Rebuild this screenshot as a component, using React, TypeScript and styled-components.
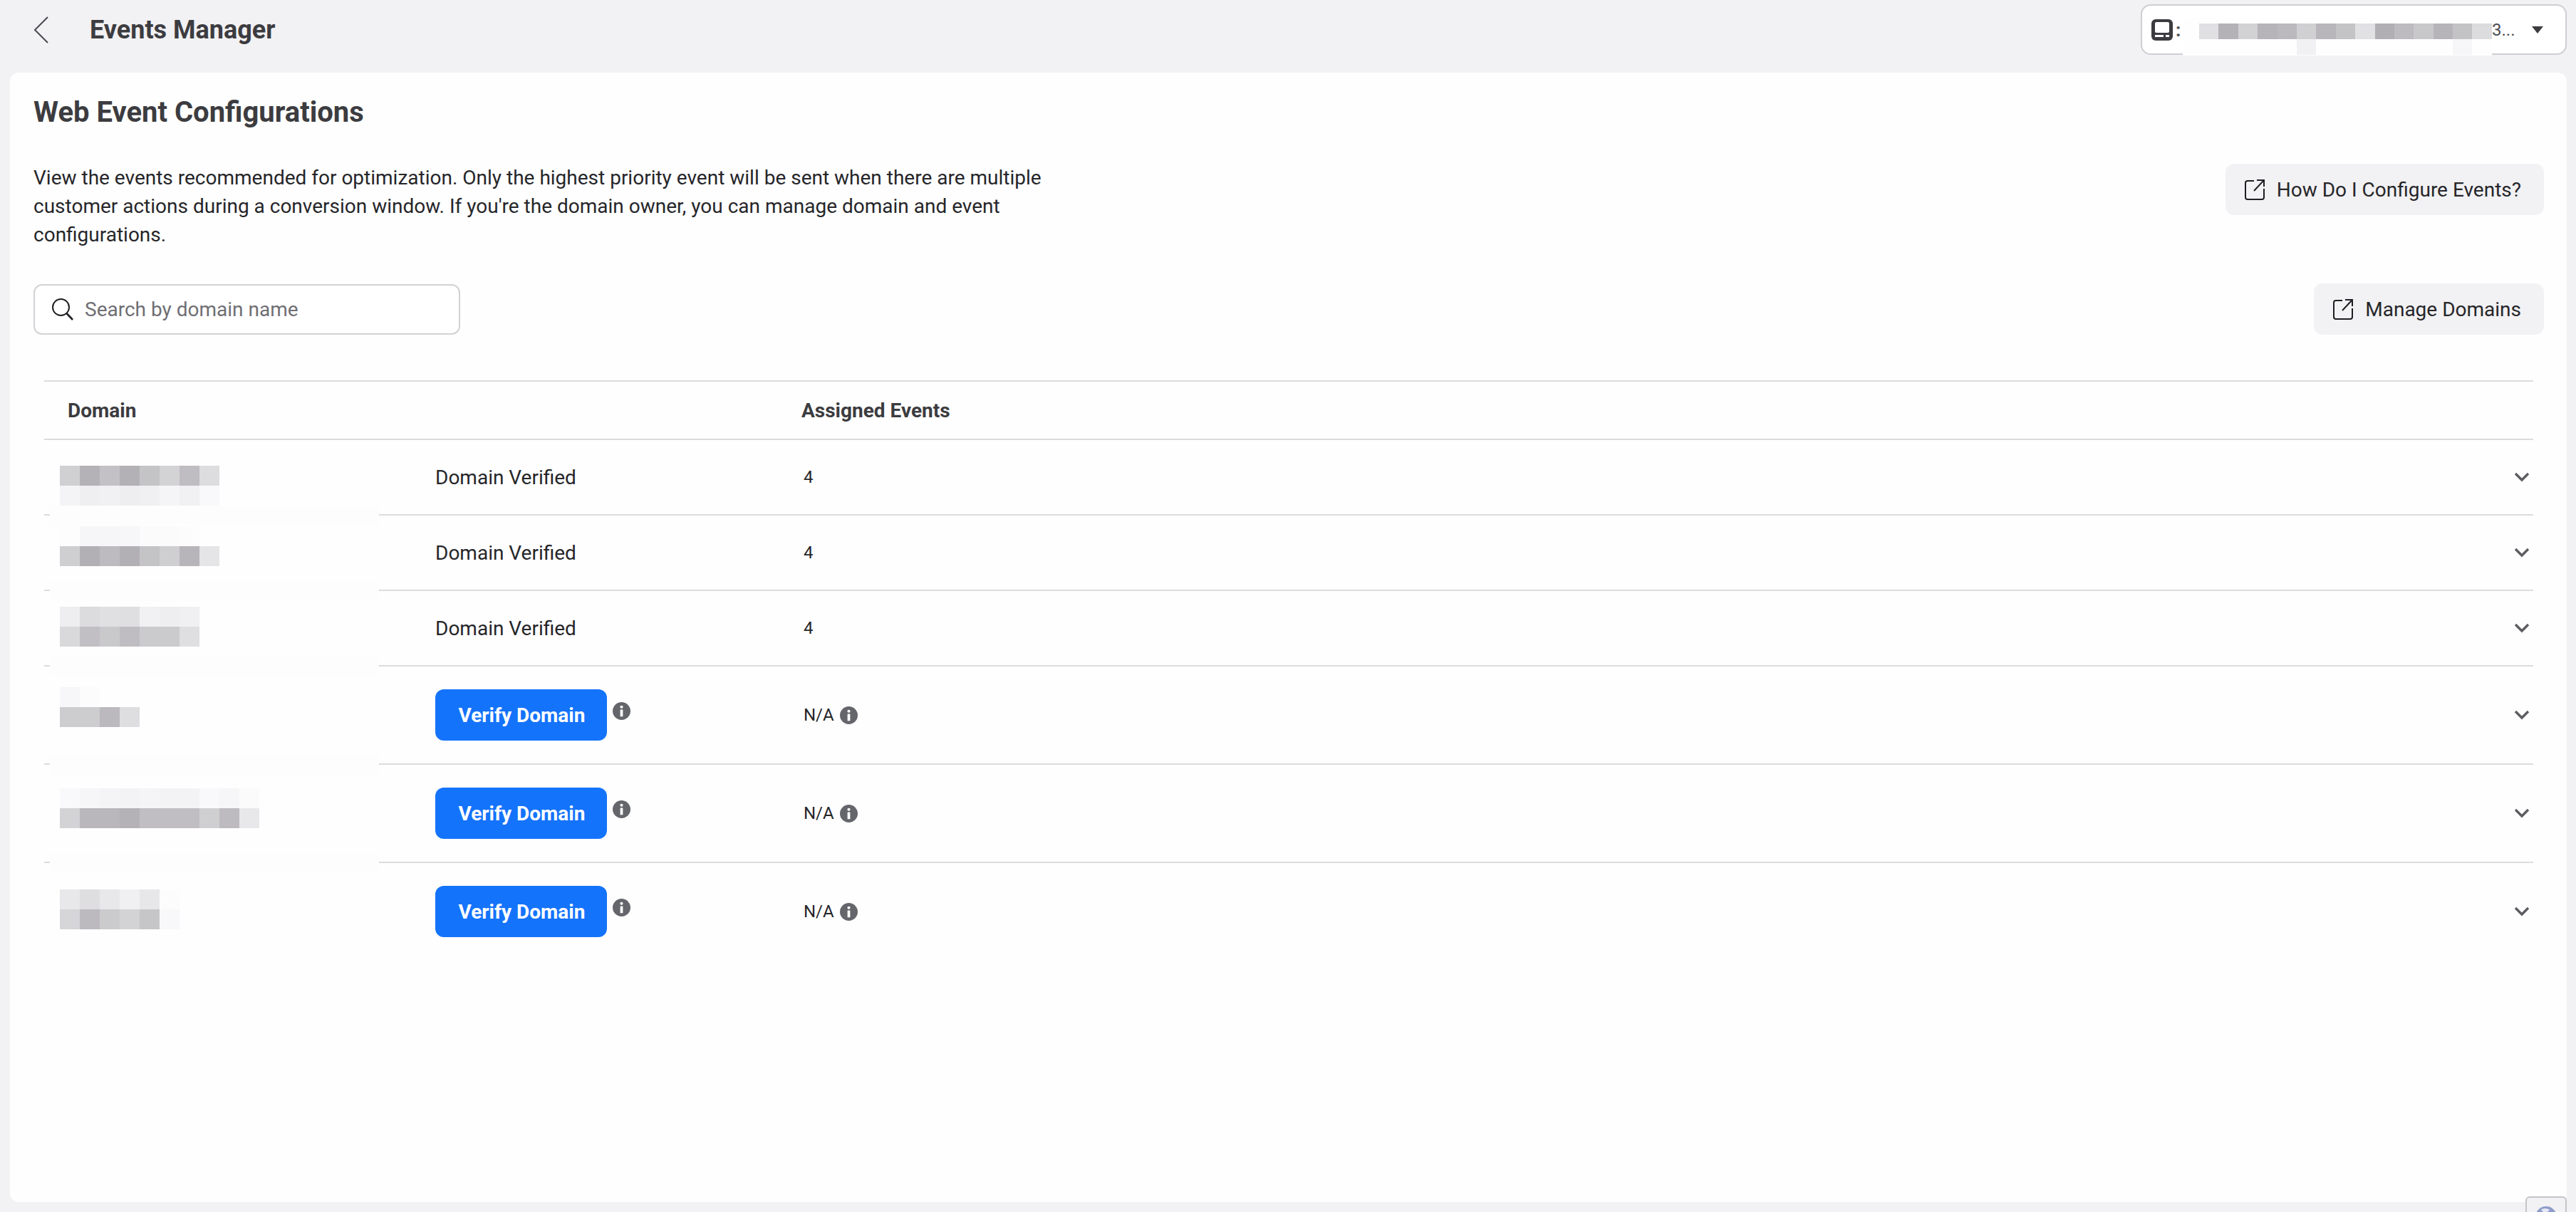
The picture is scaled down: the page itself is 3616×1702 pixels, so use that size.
import styled, { createGlobalStyle } from 'styled-components';

const GlobalStyle = createGlobalStyle`
html, body {
  margin: 0;
  padding: 0;
  height: 1702px;
  overflow: hidden;
  background: #f2f1f3;
  font-family: Roboto, "Liberation Sans", sans-serif;
}
* { box-sizing: border-box; }
`;

const Page = styled.div`
  position: relative;
  height: 1702px;
  overflow: hidden;
`;

const TopBar = styled.header`
  height: 102px;
  padding: 6px 13px 25px 47px;
  display: flex;
  align-items: flex-start;
  justify-content: space-between;
`;

const TopLeft = styled.div`
  display: flex;
  align-items: center;
  height: 71px;
`;

const BackIcon = styled.svg`
  width: 22px;
  height: 40px;
  margin-right: 57px;
`;

const AppTitle = styled.div`
  font-size: 36px;
  font-weight: 700;
  color: #3c3c40;
`;

const AccountSelect = styled.div`
  position: relative;
  width: 598px;
  height: 71px;
  background: #fff;
  border: 2px solid #cfced2;
  border-radius: 14px;
  display: flex;
  align-items: center;
  padding-left: 13px;
`;

const SelectDots = styled.span`
  font-size: 26px;
  font-weight: 700;
  color: #55555a;
  margin-left: 4px;
`;

const SelectEnd = styled.span`
  position: absolute;
  left: 491px;
  top: 20px;
  font-size: 24px;
  color: #4b4b50;
`;

const SelectSmear = styled.div`
  position: absolute;
  left: 57px;
  top: 17px;
  width: 434px;
  height: 53px;
  background: #fefefe;
  padding: 8px 0 0 23px;
`;

const SelectCaret = styled.svg`
  position: absolute;
  right: 30px;
  top: 28px;
  width: 18px;
  height: 12px;
`;

const Card = styled.main`
  height: 1586px;
  margin: 0 13px 0 14px;
  padding: 0 32px 0 33px;
  background: #fefefe;
  border-radius: 12px;
`;

const Title = styled.h1`
  margin: 0;
  height: 128px;
  padding-top: 36px;
  font-size: 40px;
  line-height: 40px;
  font-weight: 700;
  color: #3c3c40;
`;

const InfoRow = styled.div`
  display: flex;
  justify-content: space-between;
  align-items: flex-start;
`;

const Description = styled.p`
  margin: 0;
  width: 1440px;
  font-size: 28px;
  line-height: 40px;
  color: #26262a;
`;

const SoftButton = styled.button`
  height: 72px;
  display: flex;
  align-items: center;
  gap: 16px;
  padding: 0 32px 0 26px;
  border: none;
  border-radius: 12px;
  background: #f2f1f3;
  color: #26262a;
  font-family: inherit;
  font-size: 28px;
`;

const ExternalIcon = styled.svg`
  width: 30px;
  height: 30px;
  flex: none;
`;

const ToolRow = styled.div`
  margin-top: 48px;
  display: flex;
  justify-content: space-between;
  align-items: center;
`;

const SearchBox = styled.div`
  width: 599px;
  height: 71px;
  display: flex;
  align-items: center;
  gap: 15px;
  padding-left: 23px;
  border: 2px solid #d2d1d5;
  border-radius: 12px;
  background: #fff;
`;

const SearchIcon = styled.svg`
  width: 32px;
  height: 32px;
  flex: none;
`;

const Placeholder = styled.span`
  font-size: 28px;
  color: #6f6f74;
`;

const Table = styled.section`
  margin: 64px 15px 0 15px;
  border-top: 2px solid #dcdbde;
`;

const HeaderRow = styled.div`
  height: 80px;
  display: grid;
  grid-template-columns: 1030px 1fr;
  align-items: center;
  padding-left: 33px;
  font-size: 28px;
  font-weight: 700;
  color: #3c3c40;
`;

const Row = styled.div<{ $tall?: boolean }>`
  position: relative;
  height: ${(p) => (p.$tall ? 138 : 106)}px;
  border-top: 2px solid #dcdbde;
  display: grid;
  grid-template-columns: 527px 514px 1fr 30px;
  align-items: center;
  padding-left: 22px;
`;

const Smear = styled.div`
  position: absolute;
  left: 8px;
  top: -14px;
  width: 462px;
  height: 28px;
  background: #fefdfe;
`;

const Mosaic = styled.div<{ $offset: number }>`
  align-self: start;
  margin-top: ${(p) => p.$offset}px;
  position: relative;
  z-index: 1;
`;

const TileRow = styled.div`
  display: flex;
`;

const Tile = styled.span<{ $c: string; $w: number; $h: number }>`
  width: ${(p) => p.$w}px;
  height: ${(p) => p.$h}px;
  background: ${(p) => p.$c};
  flex: none;
`;

const StatusCell = styled.div`
  display: flex;
  align-items: center;
  font-size: 28px;
  color: #26262a;
`;

const VerifyButton = styled.button`
  width: 241px;
  height: 72px;
  border: none;
  border-radius: 12px;
  background: #1473fb;
  color: #fff;
  font-family: inherit;
  font-size: 28px;
  font-weight: 700;
  padding: 0 0 0 2px;
`;

const InfoIcon = styled.svg<{ $lift?: boolean }>`
  width: 25px;
  height: 25px;
  flex: none;
  margin-left: 8px;
  margin-bottom: ${(p) => (p.$lift ? 12 : 0)}px;
`;

const EventsCell = styled.div`
  display: flex;
  align-items: center;
  font-size: 24px;
  color: #26262a;
  padding-left: 3px;
`;

const Chevron = styled.svg`
  width: 24px;
  height: 16px;
  margin-left: 2px;
`;

const GlobeWidget = styled.div`
  position: absolute;
  right: 13px;
  top: 1680px;
  width: 58px;
  height: 60px;
  background: #f2f1f3;
  border: 2px solid #c5c4c8;
  border-radius: 6px;
  display: flex;
  justify-content: center;
  padding-top: 12px;
`;

const GlobeIcon = styled.svg`
  width: 30px;
  height: 30px;
`;

const Info = ({ lift }: { lift?: boolean }) => (
  <InfoIcon $lift={lift} viewBox="0 0 24 24">
    <circle cx="12" cy="12" r="12" fill="#65656c" />
    <circle cx="12" cy="6.5" r="2" fill="#fff" />
    <rect x="10.2" y="10" width="3.6" height="9.5" rx="0.6" fill="#fff" />
  </InfoIcon>
);

const External = () => (
  <ExternalIcon viewBox="0 0 30 30" fill="none" stroke="#1f1f23" strokeWidth="2">
    <path d="M14 3H5a3 3 0 0 0-3 3v20a3 3 0 0 0 3 3h20a3 3 0 0 0 3-3V14" />
    <path d="M14 17 28 2M18 2h10v9" />
  </ExternalIcon>
);

const ChevronDown = () => (
  <Chevron viewBox="0 0 24 16" fill="none" stroke="#5c5c61" strokeWidth="3.4">
    <path d="M3 3l9 9 9-9" />
  </Chevron>
);

const Pixels = ({ rows, w = 28, h = 28 }: { rows: string[][]; w?: number; h?: number }) => (
  <>
    {rows.map((cols, i) => (
      <TileRow key={i}>
        {cols.map((c, j) => (
          <Tile key={j} $c={c} $w={w} $h={h} />
        ))}
      </TileRow>
    ))}
  </>
);

const selectPixels = [
  ['#e0dfe2', '#b4b2b6', '#d2d1d4', '#b6b4b8', '#bbb9bd', '#d0cfd2', '#b8b6ba', '#c4c3c6', '#e1e0e3', '#b1afb3', '#bdbbbf', '#c8c7ca', '#b6b4b8', '#c3c2c5', '#dcdbde'],
  ['#fefefe', '#fefefe', '#fefefe', '#fefefe', '#fefefe', '#f1f0f2', '#fefefe', '#fefefe', '#fefefe', '#fefefe', '#fefefe', '#fefefe', '#fefefe', '#f6f5f7', '#fefefe'],
];

const domains = [
  {
    offset: 36,
    tiles: [
      ['#d0cfd2', '#b4b2b6', '#c3c1c5', '#b3b1b5', '#c4c3c6', '#d3d2d5', '#bfbdc1', '#dddcdf'],
      ['#f4f3f5', '#efeef0', '#f1f0f2', '#eeedf0', '#f0eff1', '#f5f4f6', '#f1f0f2', '#f9f8fa'],
    ],
    verified: true,
  },
  {
    offset: 15,
    tiles: [
      ['#fefdfe', '#f6f5f7', '#f6f5f7', '#f7f6f8', '#fcfbfc', '#fcfbfc', '#fdfcfd', '#fefefe'],
      ['#cfced1', '#b2b0b4', '#bdbbbf', '#b2b0b4', '#c4c3c6', '#cfced1', '#b7b5b9', '#e5e4e6'],
    ],
    verified: true,
  },
  {
    offset: 22,
    tiles: [
      ['#eeedf0', '#dcdbde', '#e0dfe2', '#dfdee1', '#f1f0f3', '#eeedf0', '#f0eff2'],
      ['#d9d8db', '#c1bfc3', '#c9c8cb', '#bfbdc1', '#cbcacd', '#cbcacd', '#dfdee1'],
    ],
    verified: true,
  },
  {
    offset: 29,
    tiles: [
      ['#f7f6f8', '#fdfcfd', '#fefefe', '#fefefe'],
      ['#cdcccf', '#cdcccf', '#bbb9bd', '#dedde0'],
    ],
    verified: false,
  },
  {
    offset: 33,
    tiles: [
      ['#f9f8fa', '#f6f5f7', '#f4f3f5', '#f3f2f4', '#f5f4f6', '#f3f2f4', '#f3f2f4', '#f9f8fa', '#f6f5f7', '#fcfbfc'],
      ['#d3d2d5', '#b9b7bb', '#b9b7bb', '#b4b2b6', '#c0bec2', '#c0bec2', '#c0bec2', '#cfced1', '#bdbbbf', '#e8e7ea'],
    ],
    verified: false,
  },
  {
    offset: 37,
    tiles: [
      ['#e8e7ea', '#dedde0', '#e8e7ea', '#f0eff2', '#e7e6e9', '#fdfcfd'],
      ['#d6d5d8', '#bcbabe', '#cbcacd', '#d3d2d5', '#c6c5c8', '#f8f7f9'],
    ],
    verified: false,
  },
];

export default function App() {
  return (
    <Page>
      <GlobalStyle />
      <TopBar>
        <TopLeft>
          <BackIcon viewBox="0 0 22 40" fill="none" stroke="#4a4a4f" strokeWidth="2">
            <path d="M20 2 2 20l18 18" />
          </BackIcon>
          <AppTitle>Events Manager</AppTitle>
        </TopLeft>
        <AccountSelect>
          <svg width="30" height="30" viewBox="0 0 30 30">
            <rect x="0" y="0" width="30" height="30" rx="6" fill="#3c3c40" />
            <rect x="5" y="4" width="20" height="15" rx="2" fill="#fff" />
            <rect x="5" y="22" width="12" height="3" fill="#fff" />
            <rect x="20" y="22" width="5" height="3" fill="#fff" />
          </svg>
          <SelectDots>:</SelectDots>
          <SelectEnd>3...</SelectEnd>
          <SelectSmear>
            <Pixels rows={selectPixels} w={27.4} h={22} />
          </SelectSmear>
          <SelectCaret viewBox="0 0 18 12">
            <path d="M1 1h16L9 11z" fill="#3c3c40" />
          </SelectCaret>
        </AccountSelect>
      </TopBar>
      <Card>
        <Title>Web Event Configurations</Title>
        <InfoRow>
          <Description>
            View the events recommended for optimization. Only the highest priority event will be sent when there are multiple
            customer actions during a conversion window. If you're the domain owner, you can manage domain and event
            configurations.
          </Description>
          <SoftButton>
            <External />
            How Do I Configure Events?
          </SoftButton>
        </InfoRow>
        <ToolRow>
          <SearchBox>
            <SearchIcon viewBox="0 0 32 32" fill="none" stroke="#1f1f23" strokeWidth="2">
              <circle cx="13.5" cy="13.5" r="11.5" />
              <path d="M21.5 22 30 31" strokeWidth="2.6" />
            </SearchIcon>
            <Placeholder>Search by domain name</Placeholder>
          </SearchBox>
          <SoftButton>
            <External />
            Manage Domains
          </SoftButton>
        </ToolRow>
        <Table>
          <HeaderRow>
            <span>Domain</span>
            <span>Assigned Events</span>
          </HeaderRow>
          {domains.map((d, i) => (
            <Row key={i} $tall={!d.verified}>
              <Mosaic $offset={d.offset}>
                <Pixels rows={d.tiles} />
              </Mosaic>
              {d.verified ? (
                <StatusCell>Domain Verified</StatusCell>
              ) : (
                <StatusCell>
                  <VerifyButton>Verify Domain</VerifyButton>
                  <Info lift />
                </StatusCell>
              )}
              {d.verified ? (
                <EventsCell>4</EventsCell>
              ) : (
                <EventsCell>
                  N/A
                  <Info />
                </EventsCell>
              )}
              <ChevronDown />
              {i > 0 && <Smear />}
            </Row>
          ))}
        </Table>
      </Card>
      <GlobeWidget>
        <GlobeIcon viewBox="0 0 30 30">
          <circle cx="15" cy="15" r="15" fill="#8f9cc9" />
          <path d="M8 5c4-3 9-2 12 0l-3 3-5 1z" fill="#e4e7f3" />
        </GlobeIcon>
      </GlobeWidget>
    </Page>
  );
}
